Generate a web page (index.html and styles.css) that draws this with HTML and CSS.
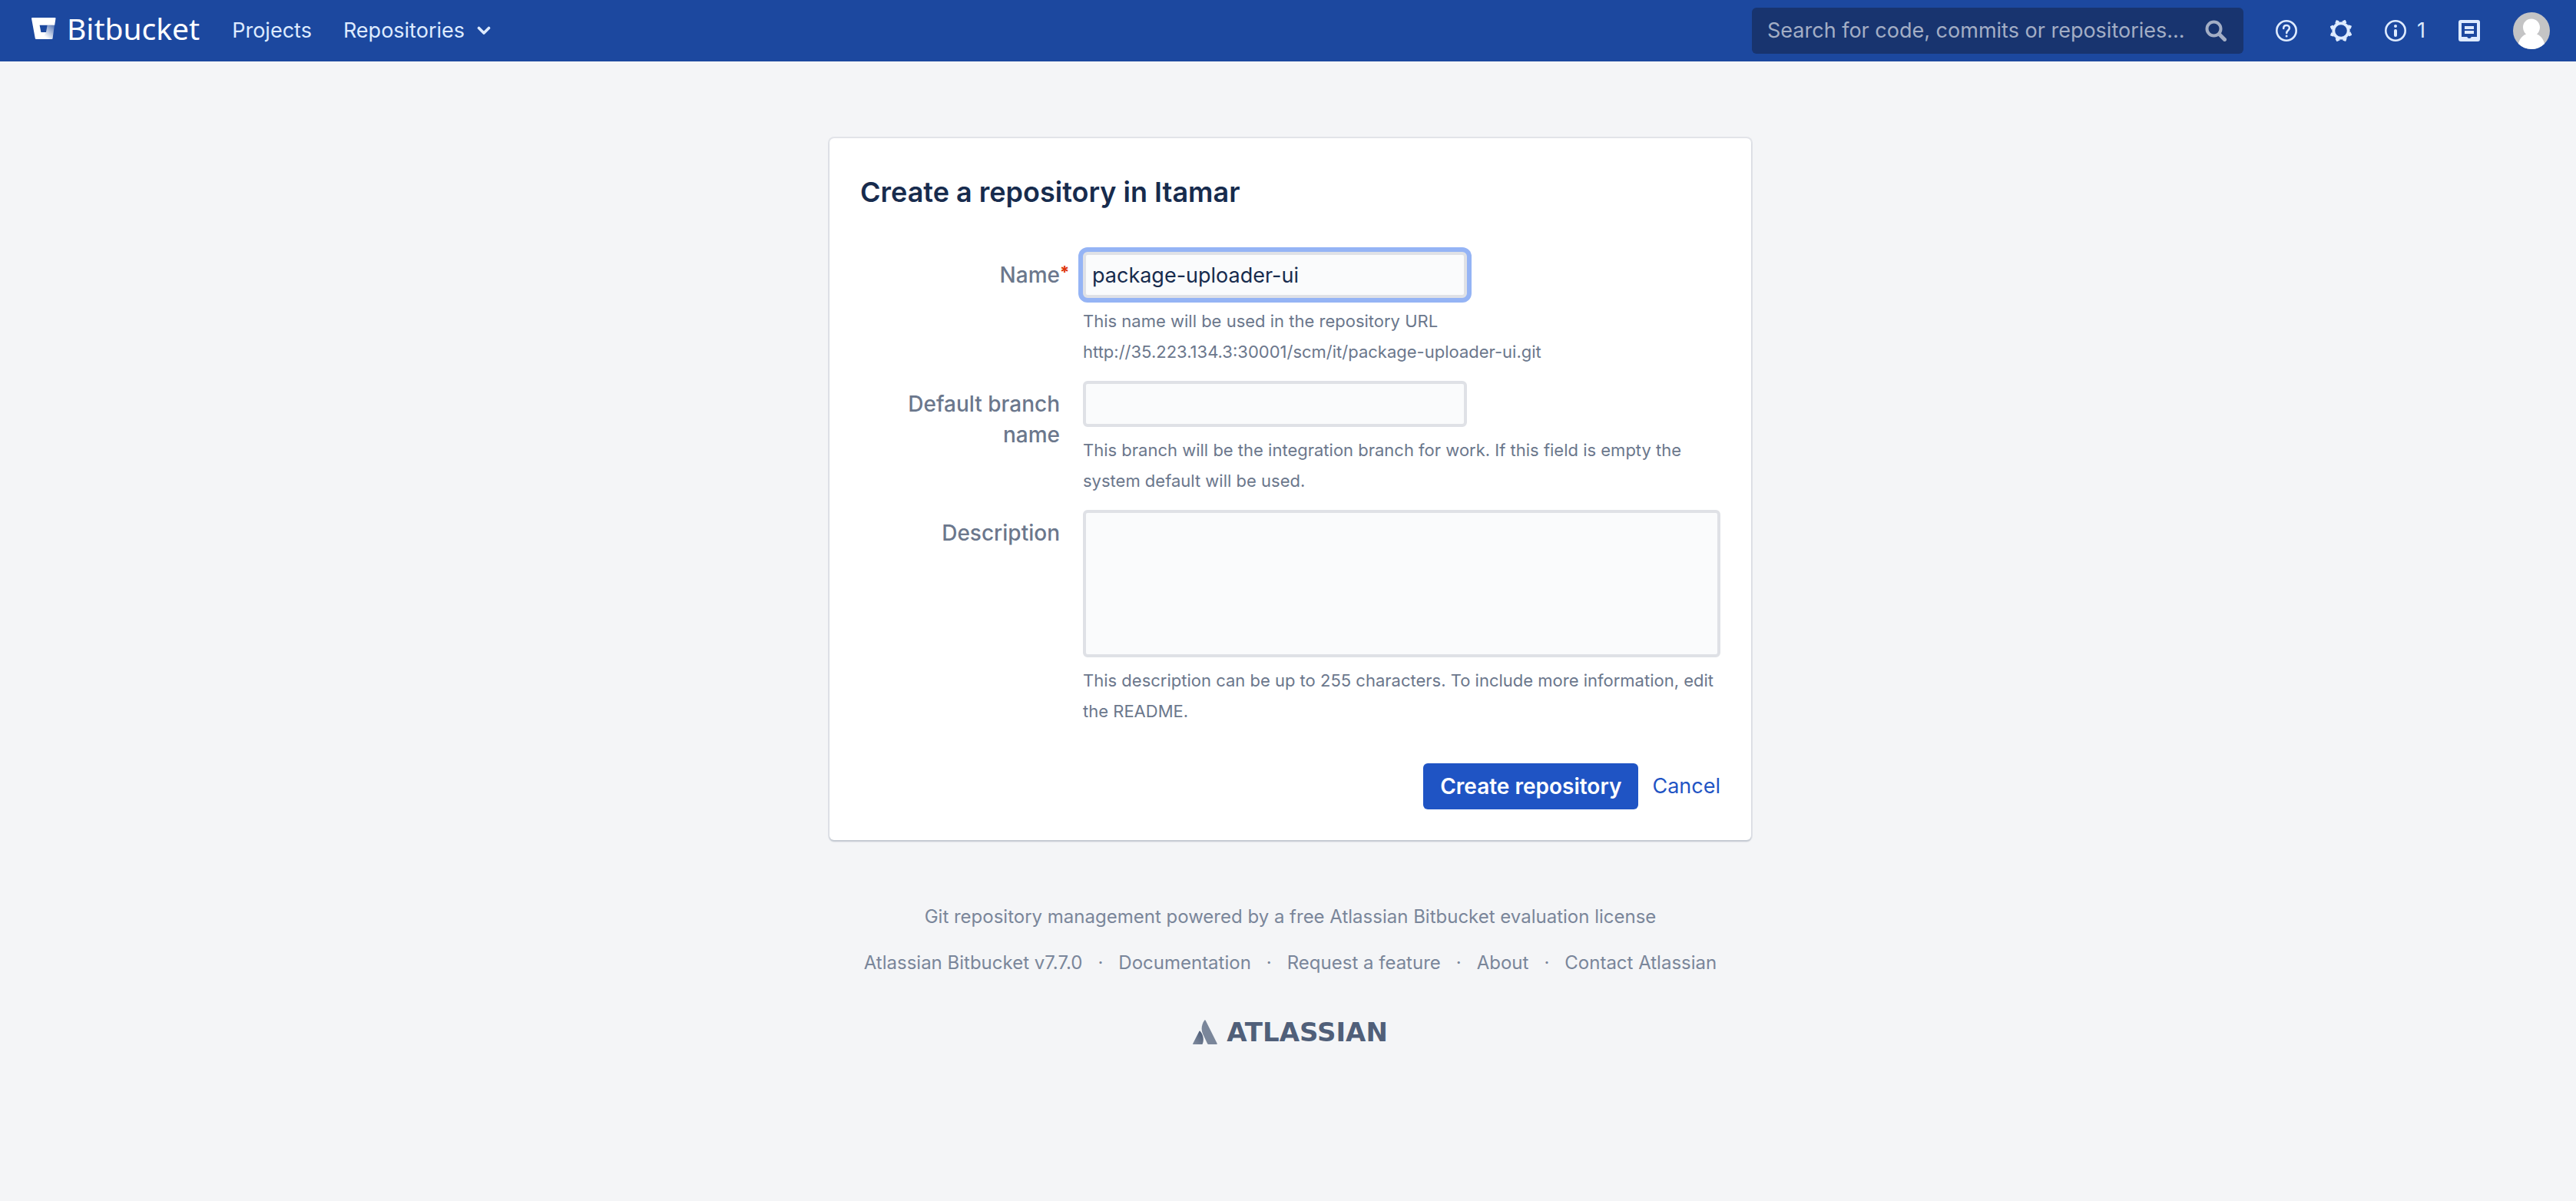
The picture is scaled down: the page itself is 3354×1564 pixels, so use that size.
FILE: index.html
```html
<!DOCTYPE html>
<html lang="en">
<head>
<meta charset="utf-8">
<title>Create a repository - Bitbucket</title>
<meta name="viewport" content="width=device-width, initial-scale=1">
<link rel="stylesheet" href="styles.css">
</head>
<body>
<header class="header">
  <a class="logo" href="#">
    <svg class="logo-mark" viewBox="0 0 32 28" aria-hidden="true">
      <defs>
        <linearGradient id="bucket" x1="1" y1="0.2" x2="0.4" y2="0.8">
          <stop offset="0" stop-color="#fff" stop-opacity="0.35"/>
          <stop offset="1" stop-color="#fff"/>
        </linearGradient>
      </defs>
      <path fill="#fff" d="M1 0h29.600q1 0 .9 1l-1.300 8.700H10.600l1.800 9.300H19l-5.500 9H6q-1 0-1.200-1L0 1q0-1 1-1z"/>
      <path fill="url(#bucket)" d="M29.900 9.700H20.600L19 19h-6.600l-4 9H26.500q1 0 1.100-1z"/>
    </svg>
    <span>Bitbucket</span>
  </a>
  <nav class="nav">
    <a href="#">Projects</a>
    <a href="#">Repositories
      <svg class="chevron" viewBox="0 0 18 12" aria-hidden="true"><path d="M2.500 2.500 9 9l6.500-6.500" fill="none" stroke="currentColor" stroke-width="3.600" stroke-linecap="round" stroke-linejoin="round"/></svg>
    </a>
  </nav>
  <form class="search" role="search">
    <input type="text" aria-label="Search" placeholder="Search for code, commits or repositories...">
    <svg viewBox="0 0 28 28" aria-hidden="true"><circle cx="11.500" cy="11.500" r="9" fill="none" stroke="currentColor" stroke-width="4"/><path d="m19 19 6.500 6.500" stroke="currentColor" stroke-width="5" stroke-linecap="round"/></svg>
  </form>
  <div class="tools">
    <a href="#" aria-label="Help">
      <svg viewBox="0 0 28 28" aria-hidden="true"><circle cx="14" cy="14" r="12.700" fill="none" stroke="currentColor" stroke-width="2.600"/><path d="M10.200 11c0-2.400 1.600-4 3.800-4s3.900 1.500 3.900 3.600c0 2.800-3.700 3-3.700 6.400" fill="none" stroke="currentColor" stroke-width="2.500" stroke-linecap="round"/><circle cx="14.100" cy="21" r="1.500" fill="currentColor"/></svg>
    </a>
    <a href="#" aria-label="Administration">
      <svg viewBox="0 0 28 28" aria-hidden="true"><circle cx="14" cy="14" r="9.700" fill="none" stroke="currentColor" stroke-width="3.800"/><g fill="currentColor"><path id="tooth" d="M6.200 4.500 7.600.5Q8 0 8.600.2l2.700 1q.6.300.4.900l-1 3z"/><use href="#tooth" transform="rotate(45 14 14)"/><use href="#tooth" transform="rotate(90 14 14)"/><use href="#tooth" transform="rotate(135 14 14)"/><use href="#tooth" transform="rotate(180 14 14)"/><use href="#tooth" transform="rotate(225 14 14)"/><use href="#tooth" transform="rotate(270 14 14)"/><use href="#tooth" transform="rotate(315 14 14)"/></g></svg>
    </a>
    <a class="alerts" href="#" aria-label="System notifications, 1">
      <svg viewBox="0 0 28 28" aria-hidden="true"><circle cx="14" cy="14" r="12.700" fill="none" stroke="currentColor" stroke-width="2.600"/><circle cx="14" cy="8" r="2" fill="currentColor"/><rect x="12" y="12" width="4" height="10" rx="2" fill="currentColor"/></svg>
      <span>1</span>
    </a>
    <a href="#" aria-label="Inbox">
      <svg viewBox="0 0 28 28" aria-hidden="true"><path fill="currentColor" fill-rule="evenodd" d="M3 0h22a3 3 0 0 1 3 3v22a3 3 0 0 1-3 3H3a3 3 0 0 1-3-3V3a3 3 0 0 1 3-3zM4 4v18h7.200q.5 2 2.800 2t2.800-2H24V4zM8 8h12v4H8zM8 14h12v4H8z"/></svg>
    </a>
    <a class="avatar" href="#" aria-label="Your profile">
      <svg viewBox="0 0 48 48" aria-hidden="true"><defs><clipPath id="round"><circle cx="24" cy="24" r="24"/></clipPath></defs><g clip-path="url(#round)"><path fill="#c4c4c5" d="M0 0h48v48H0z"/><path fill="#fff" d="M24 8.500c6.200 0 11 4.800 11 11 0 3.500-1.500 6.800-4 9 6.500 2.500 9 8 10.500 14V48h-35v-5.500C8 36.500 10.500 31 17 28.500c-2.500-2.200-4-5.500-4-9 0-6.200 4.800-11 11-11z"/></g></svg>
    </a>
  </div>
</header>

<main class="page">
  <form class="card">
    <h1>Create a repository in Itamar</h1>
    <div class="fields">
      <div class="field">
        <label for="name">Name<span class="required">*</span></label>
        <div class="control">
          <input class="box focused" id="name" type="text" value="package-uploader-ui">
          <p>This name will be used in the repository URL<br>http://35.223.134.3:30001/scm/it/package-uploader-ui.git</p>
        </div>
      </div>
      <div class="field">
        <label for="branch">Default branch name</label>
        <div class="control">
          <input class="box" id="branch" type="text">
          <p>This branch will be the integration branch for work. If this field is empty the system default will be used.</p>
        </div>
      </div>
      <div class="field">
        <label for="description">Description</label>
        <div class="control">
          <textarea class="box" id="description"></textarea>
          <p>This description can be up to 255 characters. To include more information, edit the README.</p>
        </div>
      </div>
    </div>
    <div class="actions">
      <button type="submit">Create repository</button>
      <a href="#">Cancel</a>
    </div>
  </form>
</main>

<footer class="footer">
  <p>Git repository management powered by a free Atlassian Bitbucket evaluation license</p>
  <ul>
    <li>Atlassian Bitbucket v7.7.0</li>
    <li><a href="#">Documentation</a></li>
    <li><a href="#">Request a feature</a></li>
    <li><a href="#">About</a></li>
    <li><a href="#">Contact Atlassian</a></li>
  </ul>
  <a class="atlassian" href="#">
    <svg viewBox="0 0 32 32" aria-hidden="true">
      <defs><linearGradient id="peak" x1="0.900" y1="0.200" x2="0.300" y2="1"><stop offset="0" stop-color="#505f79"/><stop offset="1" stop-color="#7a869a"/></linearGradient></defs>
      <path fill="url(#peak)" d="M8.500 14.800Q9 14 9.600 14.800c4 4.600 5.200 10.500 3.400 16.200q-.3 1-1.200 1H1Q-.2 32 .2 30.900z"/>
      <path fill="#7a869a" d="M15.200.7Q16 0 16.600.8L31.500 30.600q.6 1.400-.6 1.400H20.500q-.9 0-1.300-.8L13 18.300C10.500 12 11.500 6 15.200.7z"/>
    </svg>
    <span>ATLASSIAN</span>
  </a>
</footer>
</body>
</html>
```
FILE: styles.css
```css
* {
  box-sizing: border-box;
}

body {
  margin: 0;
  background: #f4f5f7;
  color: #172b4d;
  font: 27px/40px Inter, "Liberation Sans", sans-serif;
}

h1, p, ul {
  margin: 0;
  padding: 0;
}

a {
  color: inherit;
  text-decoration: none;
}

svg {
  display: block;
  flex: none;
}

input, textarea, button {
  font: inherit;
  color: inherit;
}

/* Header */
.header {
  display: flex;
  align-items: center;
  min-height: 80px;
  padding: 0 34px 0 41px;
  background: #1c489f;
  color: #deebff;
}

.logo {
  display: flex;
  align-items: center;
  gap: 14px;
  padding-bottom: 6px;
  color: #fff;
  font-family: "Noto Sans", sans-serif;
  font-size: 39px;
}

.logo-mark {
  width: 32px;
  height: 28px;
}

.nav {
  display: flex;
  gap: 41px;
  margin-left: 42px;
}

.nav a {
  display: flex;
  align-items: center;
  gap: 16px;
}

.chevron {
  width: 18px;
  height: 12px;
}

.search {
  display: flex;
  align-items: center;
  width: 640px;
  height: 60px;
  margin-left: auto;
  padding: 0 22px 0 20px;
  border-radius: 6px;
  background: #18346f;
  color: #a3aec5;
}

.search input {
  flex: 1;
  min-width: 0;
  padding: 0;
  border: 0;
  outline: 0;
  background: none;
}

.search input::placeholder {
  color: inherit;
  opacity: 1;
}

.search svg,
.tools svg {
  width: 28px;
  height: 28px;
}

.tools {
  display: flex;
  align-items: center;
  gap: 43px;
  margin-left: 42px;
}

.tools .alerts {
  display: flex;
  align-items: center;
  gap: 14px;
}

.tools .avatar svg {
  width: 48px;
  height: 48px;
}

/* Form card */
.page {
  padding: 100px 0 0 6px;
}

.card {
  max-width: 1200px;
  margin: 0 auto;
  padding: 40px;
  border-radius: 6px;
  background: #fff;
  box-shadow: 0 2px 2px #c1c7d0, 0 0 0 2px #e2e4e9;
}

h1 {
  margin-bottom: 48px;
  font-size: 36px;
  font-weight: 600;
  line-height: 60px;
}

.fields {
  display: grid;
  gap: 18px;
}

.field {
  display: grid;
  grid-template-columns: 260px 1fr;
  gap: 30px;
}

.field label {
  position: relative;
  padding: 10px 0 0 40px;
  color: #6b778c;
  font-size: 28px;
  font-weight: 500;
  text-align: right;
}

.required {
  position: absolute;
  top: 6px;
  left: 100%;
  color: #de350b;
  font-size: 22px;
  font-weight: 700;
}

.box {
  display: block;
  width: 500px;
  max-width: 100%;
  height: 60px;
  padding: 0 8px;
  border: 4px solid #dfe1e6;
  border-radius: 6px;
  outline: 0;
  background: #fafbfc;
}

textarea.box {
  width: 100%;
  height: 192px;
  resize: none;
}

.focused {
  box-shadow: 0 0 0 6px #95b4f5;
}

.control p {
  margin-top: 10px;
  color: #6b778c;
  font-size: 22px;
}

.actions {
  display: flex;
  justify-content: flex-end;
  align-items: center;
  gap: 18px;
  margin-top: 48px;
}

.actions button {
  height: 60px;
  padding: 0 22px;
  border: 0;
  border-radius: 6px;
  background: #1f54c4;
  color: #fff;
  font-size: 28px;
  font-weight: 600;
}

.actions a {
  color: #1f54c4;
}

/* Footer */
.footer {
  display: flex;
  flex-direction: column;
  align-items: center;
  gap: 20px;
  padding: 80px 0 40px 6px;
  color: #7a869a;
  font-size: 24px;
}

.footer ul {
  display: flex;
  list-style: none;
}

.footer li + li::before {
  content: "·";
  margin: 0 20px;
}

.atlassian {
  display: flex;
  align-items: center;
  gap: 12px;
  margin-top: 30px;
  color: #505f79;
  font: 700 34px/40px "DejaVu Sans", sans-serif;
}

.atlassian svg {
  width: 32px;
  height: 32px;
}
```
